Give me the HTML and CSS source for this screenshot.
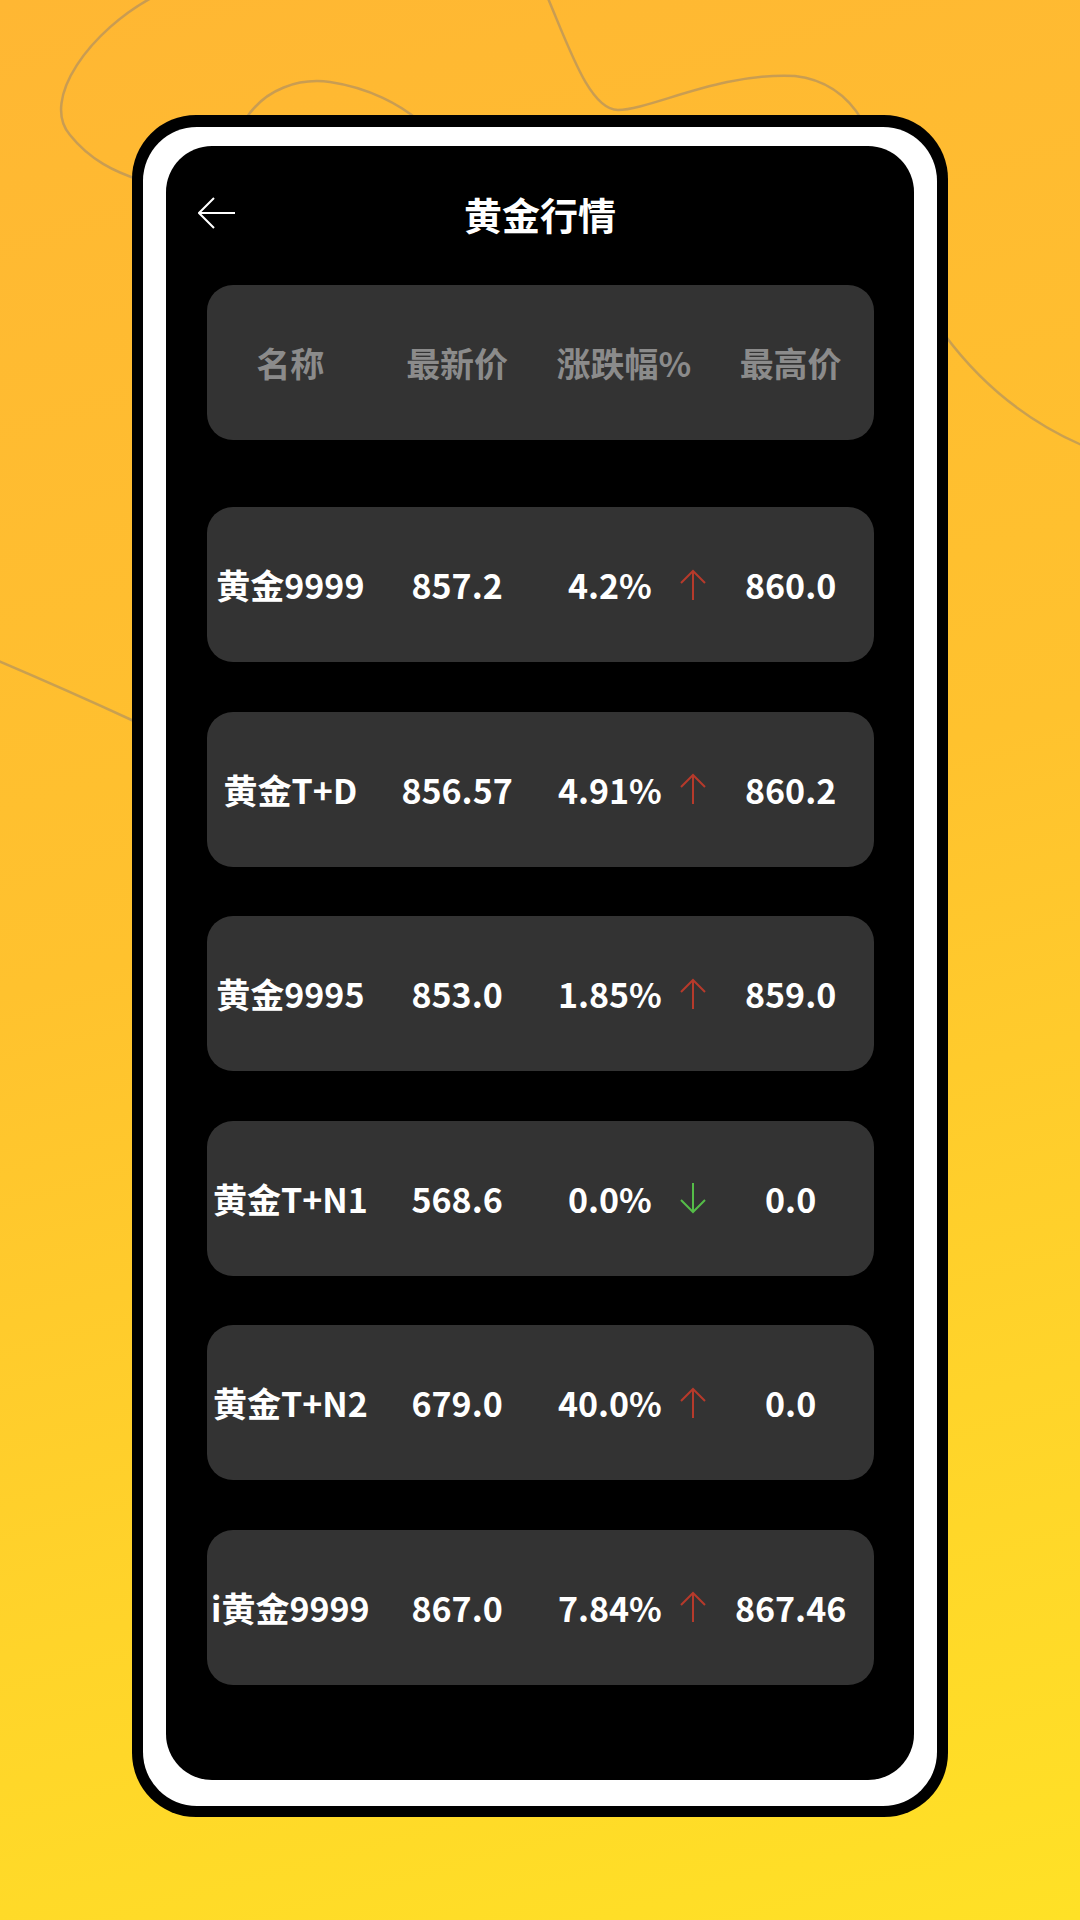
FILE: index.html
```html
<!DOCTYPE html>
<html lang="zh-CN">
  <head>
    <meta charset="UTF-8" />
    <meta name="viewport" content="width=device-width, initial-scale=1.0" />
    <title>黄金行情</title>
    <link rel="stylesheet" href="styles.css">
  </head>
  <body>
    <div id="page">
      <svg class="bg-lines" width="1080" height="1920" viewBox="0 0 1080 1920">
        <path d="M155 -4 C90 30 40 100 70 135 C90 160 115 172 140 180" />
        <path d="M547 -4 C570 50 590 110 618 110 C650 110 720 72 795 76 C830 80 850 100 862 120" />
        <path d="M245 120 C265 88 300 78 330 82 C370 88 400 105 418 120" />
        <path d="M944 334 Q1000 410 1084 446" />
        <path d="M-4 660 Q62 688 136 722" />
      </svg>
      <div class="phone">
        <div class="bezel">
          <div class="screen">
            <div class="topbar">
              <a href="#" class="back">
                <svg width="38" height="32" viewBox="0 0 38 32">
                  <path d="M37 16 H2 M16 1 L1 16 L16 31" />
                </svg>
              </a>
              <h1 class="title">黄金行情</h1>
            </div>
            <div class="list">
              <div class="card head">
                <span>名称</span>
                <span>最新价</span>
                <span>涨跌幅%</span>
                <span>最高价</span>
              </div>

              <div class="card row">
                <span>黄金9999</span>
                <span>857.2</span>
                <span class="change"><em>4.2%</em><i class="up"></i></span>
                <span>860.0</span>
              </div>
              <div class="card row">
                <span>黄金T+D</span>
                <span>856.57</span>
                <span class="change"><em>4.91%</em><i class="up"></i></span>
                <span>860.2</span>
              </div>
              <div class="card row">
                <span>黄金9995</span>
                <span>853.0</span>
                <span class="change"><em>1.85%</em><i class="up"></i></span>
                <span>859.0</span>
              </div>
              <div class="card row">
                <span>黄金T+N1</span>
                <span>568.6</span>
                <span class="change"><em>0.0%</em><i class="down"></i></span>
                <span>0.0</span>
              </div>
              <div class="card row">
                <span>黄金T+N2</span>
                <span>679.0</span>
                <span class="change"><em>40.0%</em><i class="up"></i></span>
                <span>0.0</span>
              </div>
              <div class="card row">
                <span>i黄金9999</span>
                <span>867.0</span>
                <span class="change"><em>7.84%</em><i class="up"></i></span>
                <span>867.46</span>
              </div>
            </div>
          </div>
        </div>
      </div>
    </div>
    <script>
      // 涨跌箭头
      var up = '<svg width="26" height="32" viewBox="0 0 26 32"><path d="M13 31 V2 M1 14 L13 2 L25 14" /></svg>';
      var down = '<svg width="26" height="32" viewBox="0 0 26 32"><path d="M13 1 V30 M1 18 L13 30 L25 18" /></svg>';
      var icons = document.querySelectorAll(".change i");
      for (var i = 0; i < icons.length; i++) {
        icons[i].innerHTML = icons[i].className == "up" ? up : down;
      }
    </script>
  </body>
</html>
```

FILE: styles.css
```css
* {
  margin: 0;
  padding: 0;
  box-sizing: border-box;
  text-decoration: none;
}
body {
  width: 1080px;
  height: 1920px;
  overflow: hidden;
  font-family: "Noto Sans CJK SC", "Noto Sans", sans-serif;
}
#page {
  width: 1080px;
  height: 1920px;
  position: relative;
  padding-top: 115px;
  background: linear-gradient(165deg, #ffb733 0%, #ffc22e 45%, #ffd42a 75%, #ffe126 100%);
}
.bg-lines {
  position: absolute;
  left: 0;
  top: 0;
  z-index: 0;
}
.bg-lines path {
  fill: none;
  stroke: rgba(120, 115, 130, 0.4);
  stroke-width: 2.5;
}
.phone {
  position: relative;
  z-index: 1;
  width: 816px;
  height: 1702px;
  margin-left: 132px;
  padding: 12px 11px 11px 11px;
  background: #000;
  border-radius: 64px;
}
.bezel {
  height: 100%;
  padding: 19px 23px 26px 23px;
  background: #fff;
  border-radius: 54px;
}
.screen {
  height: 100%;
  background: #000;
  border-radius: 46px;
  overflow: hidden;
}
.topbar {
  height: 139px;
  display: grid;
  grid-template-columns: 1fr auto 1fr;
  align-items: center;
  padding: 0 32px;
}
.back {
  display: flex;
  align-items: center;
  padding-bottom: 6px;
}
.back path {
  fill: none;
  stroke: #fff;
  stroke-width: 2;
}
.title {
  font-size: 38px;
  font-weight: bold;
  color: #fff;
  line-height: 1;
  padding-bottom: 4px;
}
.list {
  padding: 0 40px 0 41px;
  display: flex;
  flex-direction: column;
  gap: 49.5px;
}
.card {
  height: 155px;
  background: #333333;
  border-radius: 26px;
  display: grid;
  grid-template-columns: repeat(4, 1fr);
  align-items: center;
  font-weight: bold;
}
.card span {
  text-align: center;
  white-space: nowrap;
}
.head {
  margin-bottom: 17.5px;
  font-size: 34px;
  color: #8b8b8b;
}
.row {
  font-size: 34px;
  color: #fff;
}
.change {
  display: flex;
  align-items: center;
}
.change em {
  flex: 1;
  font-style: normal;
  text-align: center;
}
.change i {
  width: 28px;
  display: flex;
  justify-content: center;
}
.change path {
  fill: none;
  stroke-width: 2;
}
.change .up path {
  stroke: #b63a2b;
}
.change .down path {
  stroke: #55bd48;
}
```
